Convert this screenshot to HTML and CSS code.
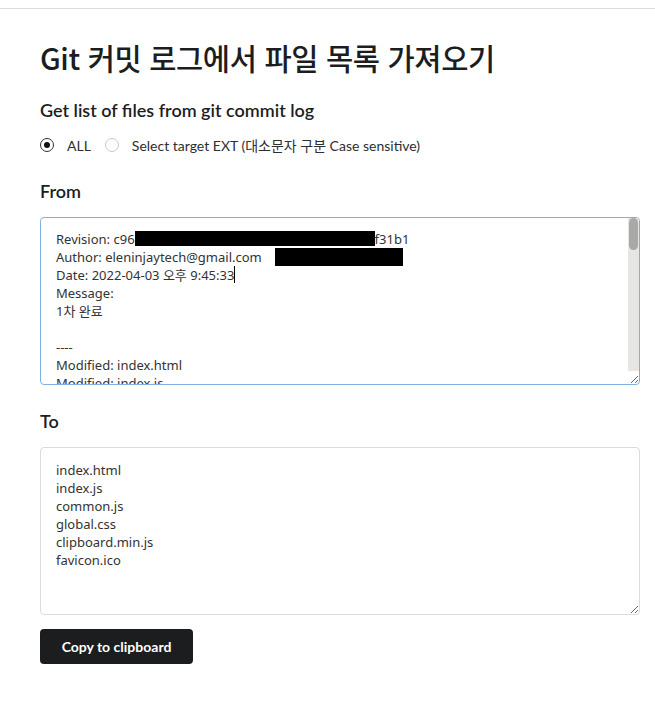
FILE: index.html
```html
<!DOCTYPE html>
<html lang="ko">
<head>
<meta charset="utf-8">
<title>Git 커밋 로그에서 파일 목록 가져오기</title>
<link rel="stylesheet" href="styles.css">
</head>
<body>
<main class="page">
  <h1 class="title">Git 커밋 로그에서 파일 목록 가져오기</h1>
  <h2 class="subtitle">Get list of files from git commit log</h2>
  <div class="options">
    <label class="opt"><span class="radio checked"></span>ALL</label>
    <label class="opt"><span class="radio"></span>Select target EXT (대소문자 구분 Case sensitive)</label>
  </div>
  <h3 class="label">From</h3>
  <div class="field">
    <div class="box focus scroll">
      <div class="line">Revision: c96<span class="redact r1"></span>f31b1</div>
      <div class="line">Author: eleninjaytech@gmail.com <span class="redact r2"></span></div>
      <div class="line">Date: 2022-04-03 오후 9:45:33<span class="caret"></span></div>
      <div class="line">Message:</div>
      <div class="line">1차 완료</div>
      <div class="line">&nbsp;</div>
      <div class="line">----</div>
      <div class="line">Modified: index.html</div>
      <div class="line">Modified: index.js</div>
      <div class="line">Modified: common.js</div>
      <div class="line">Modified: global.css</div>
    </div>
    <div class="track"><div class="thumb"></div></div>
  </div>
  <h3 class="label">To</h3>
  <textarea class="box out">index.html
index.js
common.js
global.css
clipboard.min.js
favicon.ico</textarea>
  <button class="btn">Copy to clipboard</button>
</main>
</body>
</html>
```
FILE: styles.css
```css
html, body { margin: 0; padding: 0; background: #fff; }
body {
  font-family: Lato, "Noto Sans CJK KR", sans-serif;
  color: #1c1d1f;
}
.page {
  border-top: 1px solid #dcdcdc;
  margin-top: 8px;
  padding: 0 16px 0 40px;
  display: flex;
  flex-direction: column;
  align-items: flex-start;
}
.title {
  font-family: "Noto Sans CJK KR", sans-serif;
  font-weight: 500;
  font-size: 29.6px;
  line-height: 38px;
  margin: 30px 0 0;
  letter-spacing: -0.4px;
  color: #1c1d1f;
}
.subtitle {
  font-size: 18px;
  font-weight: 600;
  line-height: 24px;
  margin: 21px 0 0;
}
.options {
  display: flex;
  align-items: center;
  margin-top: 13px;
  font-size: 14px;
  color: #2d2f31;
}
.opt { display: flex; align-items: center; margin-right: 14px; }
.radio {
  width: 12px; height: 12px;
  border: 1px solid #c8c8c8;
  border-radius: 50%;
  margin-right: 13px;
  position: relative;
  box-sizing: content-box;
}
.radio.checked { border-color: #333; }
.radio.checked::after {
  content: "";
  position: absolute;
  left: 3px; top: 3px;
  width: 6px; height: 6px;
  border-radius: 50%;
  background: #111;
}
.label {
  font-size: 18px;
  font-weight: 600;
  line-height: 24px;
  margin: 24px 0 0;
}
.field {
  position: relative;
  margin-top: 14px;
}
.box {
  box-sizing: border-box;
  width: 600px;
  height: 168px;
  border: 1px solid #dcdcdc;
  border-radius: 4px;
  padding: 13px 15px 15px;
  font-family: "Noto Sans", "Noto Sans CJK KR", sans-serif;
  font-size: 13px;
  line-height: 18px;
  color: #333;
  background: #fff;
}
.focus { border-color: #7fb1e0; }
.scroll {
  overflow: hidden;
  resize: vertical;
  padding-top: 12px;
}
.track {
  position: absolute;
  right: 1px;
  top: 1px;
  bottom: 14px;
  width: 11px;
  background: #e6e6e6;
  border-top-right-radius: 3px;
}
.thumb {
  margin: 0 1px;
  height: 32px;
  border-radius: 5px;
  background: #a9a9a9;
}
.line { white-space: nowrap; }
.redact {
  display: inline-block;
  background: #000;
  vertical-align: top;
  height: 15px;
  margin-top: 1px;
}
.r1 { width: 240px; }
.r2 { width: 128px; height: 18px; margin-top: 0; margin-left: 10px; }
.caret {
  display: inline-block;
  width: 1px; height: 17px;
  background: #000;
  vertical-align: top;
}
.out {
  resize: vertical;
  display: block;
  outline: none;
  margin-top: 14px;
}
.btn {
  margin-top: 14px;
  width: 153px;
  height: 35px;
  border: none;
  border-radius: 4px;
  background: #1c1d1f;
  color: #fff;
  font-family: Lato, sans-serif;
  font-weight: 700;
  font-size: 14px;
  cursor: pointer;
}
```
